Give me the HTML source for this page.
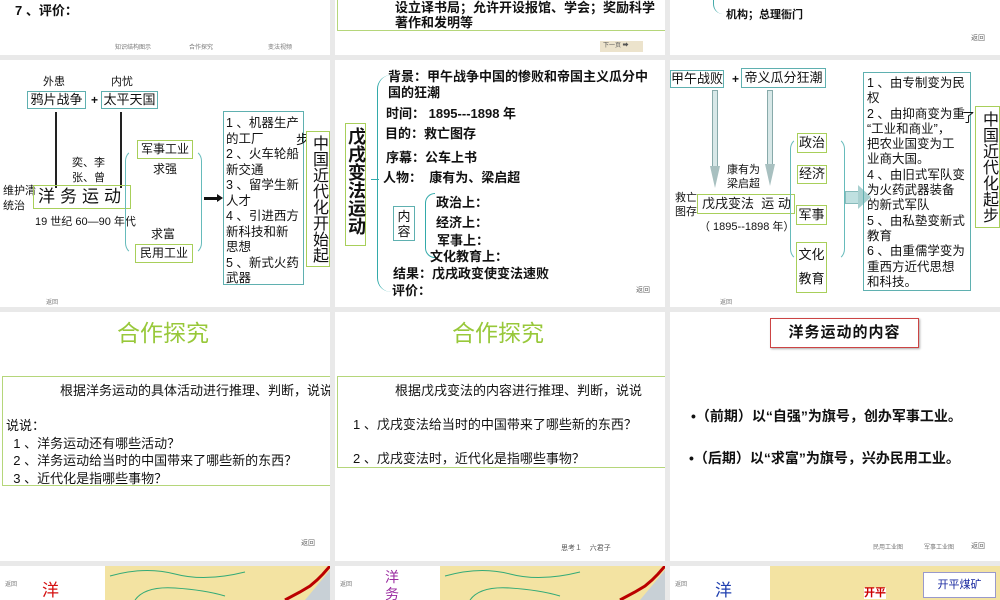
<!DOCTYPE html>
<html><head><meta charset="utf-8"><style>
*{margin:0;padding:0;box-sizing:border-box}
body{width:1000px;height:600px;background:#e9e9e9;position:relative;overflow:hidden;font-family:"Liberation Sans","Noto Sans CJK SC",sans-serif;color:#111}
.p{position:absolute;background:#fff;overflow:hidden}
.a{position:absolute;white-space:nowrap;line-height:1}
.bt{position:absolute;border:1.5px solid #5fb0b0}
.bg{position:absolute;border:1.5px solid #a8cf5a}
.sm{font-size:6px;color:#777}
.b{font-weight:bold}
.v{writing-mode:vertical-rl;text-orientation:upright}
</style></head><body>
<!-- row1 -->
<div class="p" style="left:0;top:0;width:330px;height:55px">
<div class="a b" style="left:15px;top:4px;font-size:13px">7 、评价：</div>
<div class="a sm" style="left:115px;top:45px">知识结构图示</div>
<div class="a sm" style="left:189px;top:45px">合作探究</div>
<div class="a sm" style="left:268px;top:45px">变法视频</div>
</div>
<div class="p" style="left:335px;top:0;width:330px;height:55px">
<div style="position:absolute;left:2px;top:-2px;width:330px;height:33px;border:1.5px solid #b5d67a"></div>
<div class="a b" style="left:60px;top:0px;font-size:13px;line-height:15px">设立译书局；允许开设报馆、学会；奖励科学<br>著作和发明等</div>
<div class="a" style="left:265px;top:41px;width:43px;height:11px;background:#ece3cc;font-size:6px;line-height:11px;padding-left:3px;color:#555">下一页 ➡</div>
</div>
<div class="p" style="left:670px;top:0;width:330px;height:55px">
<div style="position:absolute;left:43px;top:-12px;width:12px;height:26px;border-left:1.5px solid #4aa;border-radius:10px 0 0 10px"></div>
<div class="a b" style="left:56px;top:10px;font-size:11px">机构；总理衙门</div>
<div class="a" style="left:301px;top:35px;font-size:7px;color:#666">返回</div>
</div>
<!-- row2 col1 -->
<div class="p" style="left:0;top:60px;width:330px;height:247px">
<div class="a" style="left:43px;top:17px;font-size:11px">外患</div>
<div class="a" style="left:111px;top:17px;font-size:11px">内忧</div>
<div class="bt" style="left:27px;top:31px;width:59px;height:18px;font-size:13px;text-align:center;line-height:15px">鸦片战争</div>
<div class="a b" style="left:91px;top:34px;font-size:12px">+</div>
<div class="bt" style="left:101px;top:31px;width:57px;height:18px;font-size:13px;text-align:center;line-height:15px">太平天国</div>
<div style="position:absolute;left:55px;top:52px;width:1.5px;height:76px;background:#222"></div>
<div style="position:absolute;left:120px;top:52px;width:1.5px;height:76px;background:#222"></div>
<div class="a" style="left:72px;top:96px;font-size:11px;line-height:15px">奕、李<br>张、曾</div>
<div class="a" style="left:3px;top:124px;font-size:11px;line-height:15px">维护清<br>统治</div>
<div class="bg" style="left:33px;top:125px;width:98px;height:24px;font-size:17px;line-height:21px;text-align:center;letter-spacing:5px">洋务运动</div>
<div class="a" style="left:35px;top:157px;font-size:11px">19 世纪 60—90 年代</div>
<div style="position:absolute;left:125px;top:89px;width:77px;height:106px;border:1.5px solid #6bb;border-radius:12px;border-top-color:transparent;border-bottom-color:transparent"></div>
<div class="bg" style="left:137px;top:80px;width:56px;height:19px;font-size:12px;text-align:center;line-height:16px;background:#fff">军事工业</div>
<div class="a" style="left:153px;top:103px;font-size:12px">求强</div>
<div class="a" style="left:151px;top:168px;font-size:12px">求富</div>
<div class="bg" style="left:135px;top:184px;width:58px;height:19px;font-size:12px;text-align:center;line-height:16px;background:#fff">民用工业</div>
<div style="position:absolute;left:204px;top:137px;width:15px;height:2.5px;background:#111"></div>
<div style="position:absolute;left:217px;top:134px;border-left:6px solid #111;border-top:4px solid transparent;border-bottom:4px solid transparent"></div>
<div class="bt" style="left:223px;top:51px;width:81px;height:174px;font-size:12.5px;line-height:15.5px;padding:4px 2px;white-space:nowrap;overflow:hidden">1 、机器生产<br>的工厂<br>2 、火车轮船<br>新交通<br>3 、留学生新<br>人才<br>4 、引进西方<br>新科技和新<br>思想<br>5 、新式火药<br>武器</div>
<div class="a" style="left:296px;top:73px;font-size:13px">步</div>
<div class="bg v" style="left:306px;top:71px;width:24px;height:136px;font-size:16px;line-height:21px;padding-top:3px;background:#fff">中国近代化开始起</div>
<div class="a sm" style="left:46px;top:240px">返回</div>
</div>
<!-- row2 col2 -->
<div class="p" style="left:335px;top:60px;width:330px;height:247px">
<div class="bg v b" style="left:10px;top:63px;width:21px;height:123px;font-size:18px;line-height:18px;padding-top:3px">戊戌变法运动</div>
<div style="position:absolute;left:42px;top:15px;width:14px;height:110px;border-left:1.5px solid #3aa;border-radius:14px 0 0 0"></div>
<div style="position:absolute;left:42px;top:122px;width:14px;height:110px;border-left:1.5px solid #3aa;border-radius:0 0 0 14px"></div>
<div style="position:absolute;left:36px;top:119px;width:8px;height:6px;border-top:1.5px solid #3aa"></div>
<div class="a b" style="left:53px;top:9px;font-size:13px;line-height:16px">背景：甲午战争中国的惨败和帝国主义瓜分中<br>国的狂潮</div>
<div class="a b" style="left:51px;top:47px;font-size:13px">时间： 1895---1898 年</div>
<div class="a b" style="left:50px;top:67px;font-size:13px">目的：救亡图存</div>
<div class="a b" style="left:51px;top:91px;font-size:13px">序幕：公车上书</div>
<div class="a b" style="left:48px;top:111px;font-size:13px">人物：&nbsp; 康有为、梁启超</div>
<div class="bt" style="left:58px;top:146px;width:22px;height:35px;font-size:13px;line-height:15px;text-align:center;padding-top:2px">内<br>容</div>
<div style="position:absolute;left:90px;top:133px;width:10px;height:33px;border-left:1.5px solid #3aa;border-top:1.5px solid #3aa;border-radius:10px 0 0 0"></div>
<div style="position:absolute;left:90px;top:165px;width:10px;height:33px;border-left:1.5px solid #3aa;border-bottom:1.5px solid #3aa;border-radius:0 0 0 10px"></div>
<div class="a b" style="left:101px;top:136px;font-size:13px">政治上：</div>
<div class="a b" style="left:101px;top:156px;font-size:13px">经济上：</div>
<div class="a b" style="left:102px;top:174px;font-size:13px">军事上：</div>
<div class="a b" style="left:95px;top:190px;font-size:13px">文化教育上：</div>
<div class="a b" style="left:58px;top:207px;font-size:13px">结果：戊戌政变使变法速败</div>
<div class="a b" style="left:57px;top:224px;font-size:13px">评价：</div>
<div class="a" style="left:301px;top:227px;font-size:7px;color:#666">返回</div>
</div>
<!-- row2 col3 -->
<div class="p" style="left:670px;top:60px;width:330px;height:247px">
<div class="bt" style="left:0;top:10px;width:54px;height:18px;font-size:13px;text-align:center;line-height:15px">甲午战败</div>
<div class="a b" style="left:62px;top:13px;font-size:12px">+</div>
<div class="bt" style="left:71px;top:8px;width:85px;height:20px;font-size:13px;text-align:center;line-height:17px">帝义瓜分狂潮</div>
<div style="position:absolute;left:42px;top:30px;width:6px;height:77px;border:1px solid #8aa;background:#d8e8e8"></div>
<div style="position:absolute;left:40px;top:106px;border-top:22px solid #a8c0c0;border-left:5px solid transparent;border-right:5px solid transparent"></div>
<div style="position:absolute;left:97px;top:30px;width:6px;height:75px;border:1px solid #8aa;background:#d8e8e8"></div>
<div style="position:absolute;left:95px;top:104px;border-top:22px solid #a8c0c0;border-left:5px solid transparent;border-right:5px solid transparent"></div>
<div class="a" style="left:57px;top:103px;font-size:11px;line-height:14px">康有为<br>梁启超</div>
<div class="a" style="left:5px;top:131px;font-size:11px;line-height:14px">救亡<br>图存</div>
<div class="bg" style="left:27px;top:134px;width:98px;height:20px;font-size:13px;line-height:17px;padding-left:4px">戊戌变法&nbsp; 运 动</div>
<div class="a" style="left:29px;top:162px;font-size:11px">（ 1895--1898 年）</div>
<div style="position:absolute;left:120px;top:77px;width:55px;height:124px;border:1.5px solid #6bb;border-radius:12px;border-top-color:transparent;border-bottom-color:transparent"></div>
<div class="bg" style="left:127px;top:73px;width:30px;height:20px;font-size:13px;text-align:center;line-height:17px;background:#fff">政治</div>
<div class="bg" style="left:127px;top:105px;width:30px;height:19px;font-size:13px;text-align:center;line-height:16px;background:#fff">经济</div>
<div class="bg" style="left:126px;top:145px;width:31px;height:20px;font-size:13px;text-align:center;line-height:17px;background:#fff">军事</div>
<div class="bg" style="left:126px;top:182px;width:31px;height:51px;font-size:13px;text-align:center;line-height:24px;background:#fff">文化<br>教育</div>
<div style="position:absolute;left:175px;top:131px;width:14px;height:13px;background:#bfe0e0;border:1px solid #8bb"></div>
<div style="position:absolute;left:188px;top:125px;border-left:13px solid #a8d0d0;border-top:12px solid transparent;border-bottom:12px solid transparent"></div>
<div class="bt" style="left:193px;top:12px;width:108px;height:219px;font-size:12.5px;line-height:15.3px;padding:3px 3px;white-space:nowrap;overflow:hidden">1 、由专制变为民<br>权<br>2 、由抑商变为重<br>“工业和商业”，<br>把农业国变为工<br>业商大国。<br>4 、由旧式军队变<br>为火药武器装备<br>的新式军队<br>5 、由私塾变新式<br>教育<br>6 、由重儒学变为<br>重西方近代思想<br>和科技。</div>
<div class="bg v" style="left:305px;top:46px;width:25px;height:122px;font-size:16px;line-height:22px;padding-top:4px;background:#fff">中国近代化起步</div>
<div class="a" style="left:292px;top:51px;font-size:13px">了</div>
<div class="a sm" style="left:50px;top:240px">返回</div>
</div>
<!-- row3 -->
<div class="p" style="left:0;top:312px;width:330px;height:249px">
<div class="a" style="left:117px;top:10px;font-size:23px;color:#98c83a">合作探究</div>
<div style="position:absolute;left:2px;top:64px;width:340px;height:110px;border:1.5px solid #b5d67a"></div>
<div class="a" style="left:60px;top:72px;font-size:13px">根据洋务运动的具体活动进行推理、判断，说说</div>
<div class="a" style="left:6px;top:105px;font-size:13px;line-height:17.5px">说说：<br>&nbsp;&nbsp;1 、洋务运动还有哪些活动？<br>&nbsp;&nbsp;2 、洋务运动给当时的中国带来了哪些新的东西？<br>&nbsp;&nbsp;3 、近代化是指哪些事物？</div>
<div class="a" style="left:301px;top:228px;font-size:7px;color:#666">返回</div>
</div>
<div class="p" style="left:335px;top:312px;width:330px;height:249px">
<div class="a" style="left:117px;top:10px;font-size:23px;color:#98c83a">合作探究</div>
<div style="position:absolute;left:2px;top:64px;width:340px;height:92px;border:1.5px solid #b5d67a"></div>
<div class="a" style="left:60px;top:72px;font-size:13px">根据戊戌变法的内容进行推理、判断，说说</div>
<div class="a" style="left:18px;top:106px;font-size:13px">1 、戊戌变法给当时的中国带来了哪些新的东西？</div>
<div class="a" style="left:18px;top:140px;font-size:13px">2 、戊戌变法时，近代化是指哪些事物？</div>
<div class="a" style="left:226px;top:233px;font-size:7px;color:#555">思考１&nbsp;&nbsp;&nbsp; 六君子</div>
</div>
<div class="p" style="left:670px;top:312px;width:330px;height:249px">
<div style="position:absolute;left:100px;top:6px;width:149px;height:30px;border:1.5px solid #c44;box-shadow:1px 1px 2px #aaa;font-size:15px;font-weight:bold;text-align:center;line-height:27px;letter-spacing:1px">洋务运动的内容</div>
<div class="a b" style="left:21px;top:97px;font-size:14px">•（前期）以“自强”为旗号，创办军事工业。</div>
<div class="a b" style="left:19px;top:139px;font-size:14px">•（后期）以“求富”为旗号，兴办民用工业。</div>
<div class="a sm" style="left:203px;top:233px">民用工业图</div>
<div class="a sm" style="left:254px;top:233px">军事工业图</div>
<div class="a" style="left:301px;top:231px;font-size:7px;color:#666">返回</div>
</div>
<!-- row4 -->
<div class="p" style="left:0;top:566px;width:330px;height:34px">
<div class="a sm" style="left:5px;top:16px">返回</div>
<div class="a" style="left:42px;top:16px;font-size:17px;color:#d41010">洋</div>
<div style="position:absolute;left:105px;top:0;width:225px;height:34px;background:#f3e3a2"></div>
<svg style="position:absolute;left:105px;top:0" width="225" height="34"><path d="M200 34 L225 4 L225 34Z" fill="#c8d0d6"/><path d="M180 34 L195 26 L205 20 L212 14 L218 8 L225 0" stroke="#b00" stroke-width="3" fill="none"/><path d="M5 10 Q40 0 70 8 T140 6" stroke="#3a7" fill="none"/><path d="M30 34 Q40 20 70 22 T120 30" stroke="#3a7" fill="none"/></svg>
</div>
<div class="p" style="left:335px;top:566px;width:330px;height:34px">
<div class="a sm" style="left:5px;top:16px">返回</div>
<div class="a" style="left:50px;top:3px;font-size:14px;color:#9a2aa0;line-height:17px">洋<br>务</div>
<div style="position:absolute;left:105px;top:0;width:225px;height:34px;background:#f3e3a2"></div>
<svg style="position:absolute;left:105px;top:0" width="225" height="34"><path d="M200 34 L225 4 L225 34Z" fill="#c8d0d6"/><path d="M180 34 L195 26 L205 20 L212 14 L218 8 L225 0" stroke="#b00" stroke-width="3" fill="none"/><path d="M5 10 Q40 0 70 8 T140 6" stroke="#3a7" fill="none"/><path d="M30 34 Q40 20 70 22 T120 30" stroke="#3a7" fill="none"/></svg>
</div>
<div class="p" style="left:670px;top:566px;width:330px;height:34px">
<div class="a sm" style="left:5px;top:16px">返回</div>
<div class="a" style="left:45px;top:16px;font-size:17px;color:#2040b0">洋</div>
<div style="position:absolute;left:100px;top:0;width:230px;height:34px;background:#f3e3a2"></div>
<div class="a b" style="left:194px;top:22px;font-size:11px;color:#c00;background:#fff">开平</div>
<div style="position:absolute;left:253px;top:6px;width:73px;height:26px;background:#fff;border:1px solid #99c;font-size:11px;color:#1a2aa0;text-align:center;line-height:24px">开平煤矿</div>
</div>
</body></html>
